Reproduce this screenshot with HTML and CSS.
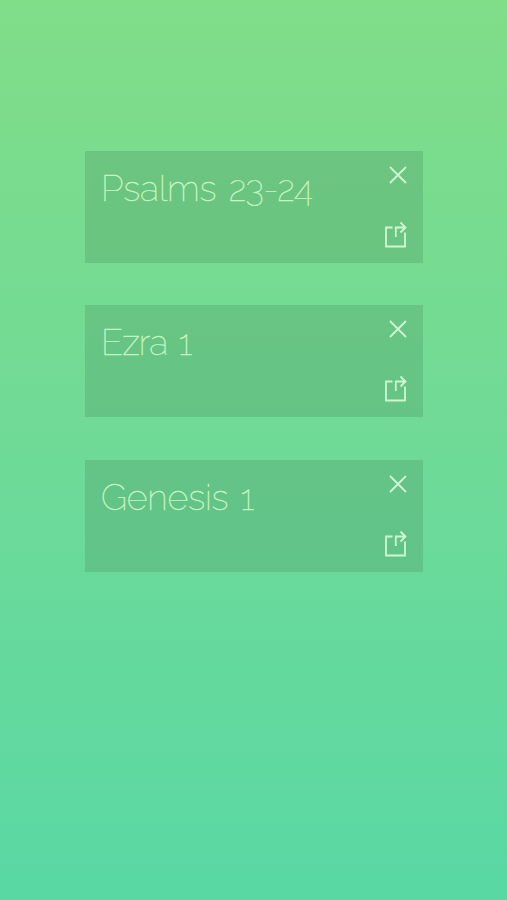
FILE: index.html
```html
<!DOCTYPE html>
<html lang="en">
<head>
<meta charset="UTF-8" />
<meta name="viewport" content="width=device-width, initial-scale=1" />
<title>Readings</title>
<link rel="stylesheet" href="styles.css">
</head>
<body>
  <main class="reading-list">
    <section class="card">
      <h2 class="title">Psalms <span class="num">23-24</span></h2>
      <div class="actions">
        <button class="icon-btn" aria-label="Remove"><svg class="close" viewBox="0 0 18 18"><path d="M1 1L17 17M17 1L1 17" /></svg></button>
        <button class="icon-btn" aria-label="Share"><svg class="share" viewBox="0 0 24 28"><path d="M9.5 6.5H3V25.5H22V11.5M12.8 16V6.5H22M17.5 1.5L22.5 6.5L17.5 11.5" /></svg></button>
      </div>
    </section>
    <section class="card">
      <h2 class="title tight">Ezra <span class="num">1</span></h2>
      <div class="actions">
        <button class="icon-btn" aria-label="Remove"><svg class="close" viewBox="0 0 18 18"><path d="M1 1L17 17M17 1L1 17" /></svg></button>
        <button class="icon-btn" aria-label="Share"><svg class="share" viewBox="0 0 24 28"><path d="M9.5 6.5H3V25.5H22V11.5M12.8 16V6.5H22M17.5 1.5L22.5 6.5L17.5 11.5" /></svg></button>
      </div>
    </section>
    <section class="card">
      <h2 class="title">Genesis <span class="num">1</span></h2>
      <div class="actions">
        <button class="icon-btn" aria-label="Remove"><svg class="close" viewBox="0 0 18 18"><path d="M1 1L17 17M17 1L1 17" /></svg></button>
        <button class="icon-btn" aria-label="Share"><svg class="share" viewBox="0 0 24 28"><path d="M9.5 6.5H3V25.5H22V11.5M12.8 16V6.5H22M17.5 1.5L22.5 6.5L17.5 11.5" /></svg></button>
      </div>
    </section>
  </main>
</body>
</html>
```
FILE: styles.css
```css
* {
  box-sizing: border-box;
  margin: 0;
  padding: 0;
}
body {
  min-height: 100vh;
  background: linear-gradient(#80dd88, #6fda97 50%, #59d8a4);
  font-family: Raleway, Lato, sans-serif;
  color: #c9f5c4;
}
.reading-list {
  width: 338px;
  margin: 0 auto 0 85px;
  padding-top: 151px;
  display: flex;
  flex-direction: column;
  gap: 42.4px;
}
.card {
  height: 112px;
  padding: 14px 16px 14px 16px;
  display: flex;
  justify-content: space-between;
  background: rgba(75, 145, 95, 0.3);
}
.title {
  font-size: 36px;
  font-weight: 100;
  line-height: 46px;
  letter-spacing: -0.15px;
  word-spacing: 3px;
  white-space: nowrap;
  -webkit-text-stroke: 0.4px #c9f5c4;
}
.tight {
  letter-spacing: -1px;
}
.num {
  letter-spacing: -0.8px;
}
.actions {
  display: flex;
  flex-direction: column;
  justify-content: space-between;
  align-items: flex-end;
}
.icon-btn {
  display: block;
  background: none;
  border: none;
  line-height: 0;
  cursor: pointer;
}
svg {
  fill: none;
  stroke: #cff7d2;
  stroke-width: 1.8;
}
.close {
  width: 18px;
  height: 18px;
  margin-top: 1px;
}
.share {
  width: 24px;
  height: 28px;
}
```
